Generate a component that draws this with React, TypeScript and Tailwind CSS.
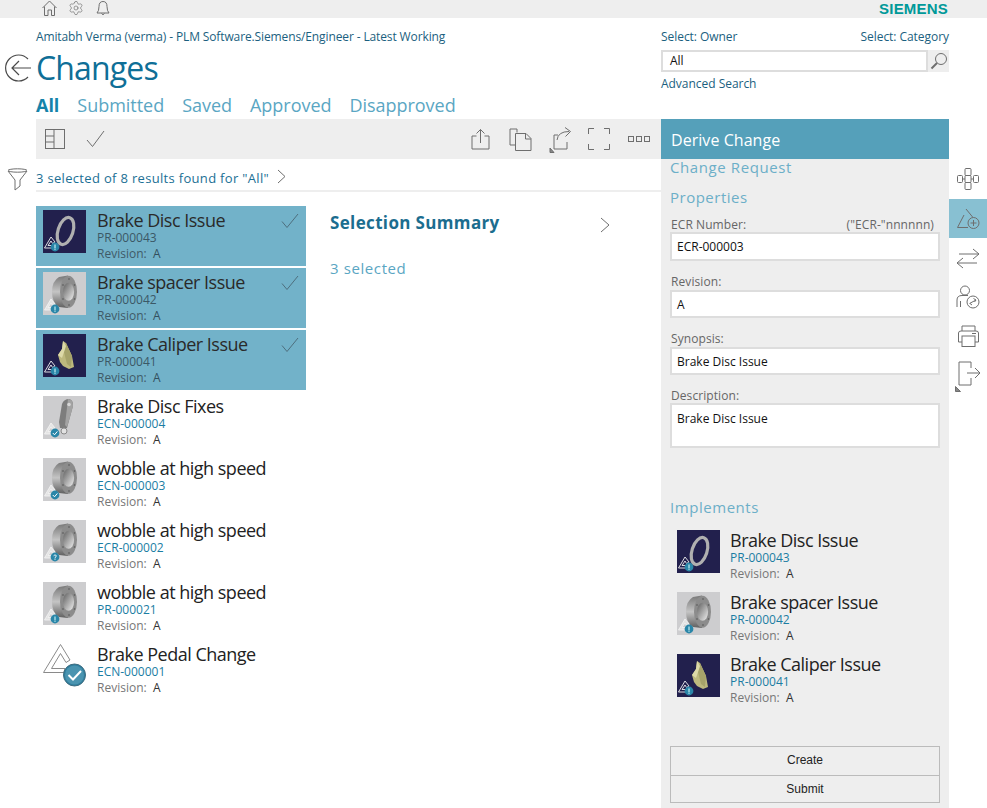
import React from "react";
import { Settings } from "lucide-react";

type ThumbKind = "disc" | "spacer" | "caliper" | "lever" | "pedal";
type Badge = "info" | "ok" | "q";

const Ico = ({ w, h, children, className = "" }: { w: number; h: number; children: React.ReactNode; className?: string }) => (
  <svg width={w} height={h} viewBox={`0 0 ${w} ${h}`} fill="none" stroke="#6e6e6e" strokeWidth={1} className={"block shrink-0 " + className}>
    {children}
  </svg>
);

function Delta({ large, light }: { large?: boolean; light?: boolean }) {
  return large ? (
    <path d="M0.5 28.5 L17.5 0.5 L27 16 L23 18.5 L17.5 9.5 L8.5 24.5 L22 24.5 L21 28.5 Z" fill="#fff" stroke="#8a8a8a" strokeWidth="1" />
  ) : (
    <path d="M1.5 38 L8 27 L12 32 L9.5 33.5 L8 31 L5 35.5 L11 35.5 L10.5 38 Z" fill={light ? "#e4e4e4" : "#22204d"} stroke="#f2f2f2" strokeWidth="0.9" />
  );
}

function BadgeMark({ kind, large }: { kind: Badge; large?: boolean }) {
  if (large) {
    return (
      <g>
        <circle cx="31.5" cy="31" r="11" fill="#2f7f9e" stroke="#3f6c80" />
        <circle cx="31.5" cy="31" r="9.5" fill="#4a94b0" />
        <path d="M25.5 31 L30 35.5 L38 27" stroke="#fff" strokeWidth="2" fill="none" />
      </g>
    );
  }
  return (
    <g>
      <circle cx="12" cy="37" r="4.4" fill="#2a86a8" />
      {kind === "info" && <path d="M12 34.5 V38.5 M12 39.2 V40" stroke="#dff" strokeWidth="1" />}
      {kind === "ok" && <path d="M9.8 37 L11.5 38.8 L14.4 35.4" stroke="#fff" strokeWidth="1" fill="none" />}
      {kind === "q" && <path d="M10.6 35.8 Q12 34 13.3 35.6 Q13.5 36.8 12 37.6 V38.5 M12 39.2 V40" stroke="#fff" strokeWidth="0.9" fill="none" />}
    </g>
  );
}

function Thumb({ kind, badge, id }: { kind: ThumbKind; badge: Badge; id: string }) {
  const navy = kind === "disc" || kind === "caliper";
  return (
    <svg width="43" height="43" viewBox="0 0 43 43" className="block shrink-0">
      <defs>
        <linearGradient id={id + "b"} x1="0" y1="0" x2="0" y2="1">
          <stop offset="0" stopColor="#777777" />
          <stop offset="0.5" stopColor="#c4c4c4" />
          <stop offset="1" stopColor="#5f5f5f" />
        </linearGradient>
        <linearGradient id={id + "h"} x1="0" y1="0" x2="1" y2="1">
          <stop offset="0" stopColor="#5e5e5e" />
          <stop offset="1" stopColor="#f0f0f0" />
        </linearGradient>
      </defs>
      {kind !== "pedal" && <rect width="43" height="43" fill={navy ? "#22204d" : "#cdcdcf"} />}
      {kind === "disc" && (
        <ellipse cx="22.5" cy="21" rx="7.5" ry="14" transform="rotate(18 22.5 21)" fill="none" stroke="#b0b0b0" strokeWidth="3.2" />
      )}
      {kind === "spacer" && (
        <g>
          <path d="M25 3.5 L16 5 Q9 9 9 20 Q9 31 16 35 L25 36 Z" fill={`url(#${id}b)`} />
          <ellipse cx="25.5" cy="19.8" rx="8.5" ry="16" fill="#8c8c8c" />
          <ellipse cx="25.5" cy="19.8" rx="5.6" ry="9" fill={`url(#${id}h)`} />
          <g fill="#555">
            <circle cx="26" cy="7" r="0.8" /><circle cx="31.5" cy="13" r="0.8" /><circle cx="31.5" cy="27" r="0.8" /><circle cx="26" cy="33" r="0.8" /><circle cx="20" cy="27" r="0.8" /><circle cx="20" cy="13" r="0.8" />
          </g>
        </g>
      )}
      {kind === "lever" && (
        <g>
          <path d="M19 8 Q21 3 26 3 Q30.5 4 30 10 L27 21 L24 32 L17 32 L16 26 Z" fill="#7d7d7d" />
          <path d="M25 3 Q30.5 4 30 10 L27 21 L24 31 L22 29 Z" fill="#a3a3a3" />
          <circle cx="26" cy="8.5" r="1.8" fill="#d6d6d6" />
          <circle cx="21" cy="35" r="3" fill="#e2e2e2" stroke="#8a8a8a" />
        </g>
      )}
      {kind === "caliper" && (
        <g>
          <path d="M20 7 L23 9 L29 22 L31 33 L26 35 L20 32 L17 28 L15 21 L19 15 Z" fill="#bdb97e" />
          <path d="M23 9 L29 22 L28 33 L24 30 L21 18 Z" fill="#a6a36a" />
          <path d="M20 7 L19 15 L15 21 L19 24 L23 12 Z" fill="#dcd9a8" />
        </g>
      )}
      <Delta large={kind === "pedal"} light={!navy} />
      <BadgeMark kind={badge} large={kind === "pedal"} />
    </svg>
  );
}

function Card({
  title, code, kind, badge, id, selected, tight,
}: { title: string; code: string; kind: ThumbKind; badge: Badge; id: string; selected?: boolean; tight?: boolean }) {
  return (
    <div className={"relative flex h-[60px] w-[270px] pl-[7px] pt-[4px] " + (selected ? "bg-[#72b2c9]" : "")}>
      <Thumb kind={kind} badge={badge} id={id} />
      <div className={"flex flex-col " + (tight ? "ml-[10px]" : "ml-[11px]")}>
        <div className={"h-[20px] text-[18px] leading-[20px] tracking-[-0.5px] whitespace-nowrap " + (selected ? "text-[#2a2a2a]" : "text-[#222222]")}>{title}</div>
        <div className={"h-[15px] text-[12px] leading-[15px] " + (selected ? "text-[#3b5866]" : "text-[#1b7da3]")}>{code}</div>
        <div className={"mt-[1px] text-[12px] leading-[15px] " + (selected ? "text-[#3f5a68]" : "text-[#777777]")}>
          Revision:&nbsp; <span className={selected ? "text-[#33505e]" : "text-[#333333]"}>A</span>
        </div>
      </div>
      {selected && (
        <Ico w={18} h={16} className="absolute right-[7px] top-[7px]">
          <path d="M1 8.5 L6 14.5 L17 1" stroke="#4e6f7e" />
        </Ico>
      )}
    </div>
  );
}

function Field({ label, value, h, mt, hint, labelH }: { label: string; value: string; h: string; mt: string; hint?: string; labelH: string }) {
  return (
    <div className={mt}>
      <div className={"flex justify-between pl-[1px] pr-[6px] text-[12px] leading-[15px] tracking-[0.08px] text-[#666666] " + labelH}>
        <span>{label}</span>
        {hint && <span>{hint}</span>}
      </div>
      <div className={"box-border border-2 border-[#dddddd] bg-white pl-[5px] text-[12px] text-[#111111] " + h}>{value}</div>
    </div>
  );
}

export default function App() {
  const items: { title: string; code: string; kind: ThumbKind; badge: Badge; selected?: boolean }[] = [
    { title: "Brake Disc Issue", code: "PR-000043", kind: "disc", badge: "info", selected: true },
    { title: "Brake spacer Issue", code: "PR-000042", kind: "spacer", badge: "info", selected: true },
    { title: "Brake Caliper Issue", code: "PR-000041", kind: "caliper", badge: "info", selected: true },
    { title: "Brake Disc Fixes", code: "ECN-000004", kind: "lever", badge: "ok" },
    { title: "wobble at high speed", code: "ECN-000003", kind: "spacer", badge: "ok" },
    { title: "wobble at high speed", code: "ECR-000002", kind: "spacer", badge: "q" },
    { title: "wobble at high speed", code: "PR-000021", kind: "spacer", badge: "info" },
    { title: "Brake Pedal Change", code: "ECN-000001", kind: "pedal", badge: "ok" },
  ];

  return (
    <div className="h-[808px] w-[987px] overflow-hidden bg-white font-['Open_Sans',sans-serif]">
      {/* top bar */}
      <div className="flex h-[18px] items-start bg-[#eeeeee] pl-[42px] pr-[39px]">
        <Ico w={15} h={16}>
          <path d="M0.5 8 L7.5 1 L14.5 8 M2.5 6.5 V15.5 H6 V10 H9.5 V15.5 H12.5 V6.5" />
        </Ico>
        <Settings size={16} strokeWidth={1} color="#6e6e6e" className="ml-[11px] shrink-0" />
        <Ico w={14} h={16} className="ml-[12px]">
          <path d="M1 13 Q3 11 3 6.5 Q3 1.5 7 1.5 Q11 1.5 11 6.5 Q11 11 13 13 Z M5.5 13.5 Q7 16 8.5 13.5" />
        </Ico>
        <div className="ml-auto h-[18px] font-['Liberation_Sans',sans-serif] text-[15px] font-bold leading-[17px] tracking-[0.2px] text-[#009999]">SIEMENS</div>
      </div>

      <div className="flex">
        {/* left column */}
        <div className="w-[661px]">
          <div className="ml-[36px] mt-[10px] h-[18px] text-[12px] leading-[18px] tracking-[-0.12px] text-[#1b5f80] whitespace-nowrap">
            Amitabh Verma (verma) - PLM Software.Siemens/Engineer - Latest Working
          </div>
          <div className="flex h-[44px] items-center">
            <div className="flex w-[36px] justify-start pl-[4px]">
              <Ico w={28} h={28}>
                <path d="M24 5 A13 13 0 1 0 24 23" stroke="#4a4a4a" strokeWidth="1.2" />
                <path d="M27 14 H8 M15 7 L8 14 L15 21" stroke="#4a4a4a" strokeWidth="1.2" />
              </Ico>
            </div>
            <div className="text-[32px] leading-[44px] tracking-[-0.85px] text-[#0f6f97]">Changes</div>
          </div>
          <div className="ml-[36px] mt-[2px] flex h-[27px] items-center gap-[18px] text-[18px] leading-[27px] tracking-[-0.03px] text-[#5aa6c3]">
            <span className="font-bold text-[#1583aa]">All</span>
            <span>Submitted</span>
            <span>Saved</span>
            <span>Approved</span>
            <span>Disapproved</span>
          </div>

          {/* toolbar */}
          <div className="ml-[36px] flex h-[40px] items-center bg-[#eeeeee] pl-[9px] pr-[11px]">
            <Ico w={20} h={20}>
              <rect x="0.5" y="0.5" width="19" height="19" strokeWidth="1" />
              <path d="M9 0.5 V19.5 M0.5 7 H9 M0.5 13 H9" />
            </Ico>
            <Ico w={19} h={18} className="ml-[21px]">
              <path d="M1 10 L6.5 16.5 L18 1" />
            </Ico>
            <div className="ml-auto flex items-center">
              <Ico w={19} h={22}>
                <path d="M5.5 8 H1 V21 H18 V8 H13.5 M9.5 15 V1.5 M5.5 5.5 L9.5 1.5 L13.5 5.5" />
              </Ico>
              <Ico w={23} h={23} className="ml-[19px]">
                <path d="M8 4.5 V1 H1 V17 H6 M6.5 5.5 H17 L22 10.5 V22.5 H6.5 Z M16.5 5.5 V11 H22" />
              </Ico>
              <Ico w={26} h={27} className="ml-[17px]">
                <path d="M9 9 H5 V23 H18 V16 M8 14 Q9 5.5 20 5.5 M16 1.5 L21.5 5.5 L16.5 10.5" />
                <path d="M1 22 L5 26.5 H1 Z" fill="#888" />
              </Ico>
              <Ico w={22} h={22} className="ml-[13px]">
                <path d="M0.5 6 V0.5 H6 M16 0.5 H21.5 V6 M21.5 16 V21.5 H16 M6 21.5 H0.5 V16" />
              </Ico>
              <Ico w={22} h={6} className="ml-[18px]">
                <rect x="0.5" y="0.5" width="5" height="5" />
                <rect x="8.5" y="0.5" width="5" height="5" />
                <rect x="16.5" y="0.5" width="5" height="5" />
              </Ico>
            </div>
          </div>

          {/* results line */}
          <div className="flex h-[33px]">
            <div className="flex w-[36px] justify-center pt-[9px] pr-[2px]">
              <Ico w={21} h={23}>
                <ellipse cx="10.5" cy="2.5" rx="9.5" ry="1.7" />
                <path d="M1 3 L8 12 V22 L13 18 V12 L20 3" />
              </Ico>
            </div>
            <div className="flex flex-1 items-center border-b-2 border-[#eeeeee] pt-[7px] text-[13px] leading-[18px] tracking-[0.32px] text-[#1b7095]">
              <span>3 selected of 8 results found for "All"</span>
              <Ico w={10} h={15} className="mb-[3px] ml-[8px]">
                <path d="M1 1 L8 7.5 L1 14" />
              </Ico>
            </div>
          </div>

          <div className="ml-[36px] mt-[14px] flex">
            <div className="flex w-[270px] flex-col gap-[2px]">
              {items.map((it, i) => (
                <Card key={i} id={"l" + i} {...it} />
              ))}
            </div>
            <div className="ml-[24px] w-[280px]">
              <div className="flex h-[34px] items-center justify-between">
                <span className="text-[17px] font-bold leading-[34px] tracking-[0.35px] text-[#1b6d8f]">Selection Summary</span>
                <Ico w={10} h={16} className="mt-[3px]">
                  <path d="M1 1 L9 8 L1 15" />
                </Ico>
              </div>
              <div className="mt-[10px] text-[15px] leading-[36px] tracking-[0.6px] text-[#5aa6c3]">3 selected</div>
            </div>
          </div>
        </div>

        {/* right column */}
        <div className="w-[288px]">
          <div className="mt-[10px] flex h-[18px] justify-between text-[12px] leading-[18px] tracking-[-0.05px] text-[#1b5f80]">
            <span>Select: Owner</span>
            <span>Select: Category</span>
          </div>
          <div className="mt-[4px] flex h-[22px]">
            <div className="box-border w-[267px] border-2 border-[#dddddd] bg-white pl-[7px] text-[12px] leading-[18px] text-[#111111]">All</div>
            <div className="flex w-[21px] items-center justify-center bg-[#eeeeee]">
              <Ico w={18} h={18}>
                <circle cx="11" cy="7" r="5.5" />
                <path d="M7 11 L1.5 16.5" strokeWidth="2" />
              </Ico>
            </div>
          </div>
          <div className="mt-[3px] h-[18px] text-[12px] leading-[18px] tracking-[-0.03px] text-[#1b5f80]">Advanced Search</div>
          <div className="mt-[26px] flex h-[689px] flex-col bg-[#eeeeee]">
            <div className="flex h-[40px] shrink-0 items-center bg-[#55a0ba] pl-[10px] pt-[2px] text-[16px] tracking-[0.05px] text-white">Derive Change</div>
            <div className="px-[9px]">
              <div className="h-[18px] text-[15px] leading-[17px] tracking-[0.6px] text-[#6cafc8]">Change Request</div>
              <div className="mt-[12px] h-[18px] text-[15px] leading-[17px] tracking-[0.5px] text-[#6cafc8]">Properties</div>
              <Field mt="mt-[10px]" labelH="h-[15px]" label="ECR Number:" hint={'("ECR-"nnnnnn)'} value="ECR-000003" h="h-[29px] leading-[25px]" />
              <Field mt="mt-[13px]" labelH="h-[16px]" label="Revision:" value="A" h="h-[28px] leading-[26px]" />
              <Field mt="mt-[13px]" labelH="h-[16px]" label="Synopsis:" value="Brake Disc Issue" h="h-[28px] leading-[26px]" />
              <Field mt="mt-[13px]" labelH="h-[15px]" label="Description:" value="Brake Disc Issue" h="h-[45px] leading-[27px]" />
              <div className="mt-[50px] h-[18px] text-[15px] leading-[18px] tracking-[0.55px] text-[#6cafc8]">Implements</div>
              <div className="mt-[10px] flex flex-col gap-[2px]">
                {items.slice(0, 3).map((it, i) => (
                  <Card key={i} id={"r" + i} tight title={it.title} code={it.code} kind={it.kind} badge={it.badge} />
                ))}
              </div>
            </div>
            <div className="mt-auto mb-[5px] px-[9px] font-['Liberation_Sans',sans-serif] text-[12px] text-[#222222]">
              <div className="box-border flex h-[29px] items-center justify-center border border-b-0 border-[#bbbbbb] pb-[2px]">Create</div>
              <div className="box-border flex h-[28px] items-center justify-center border border-[#bbbbbb]">Submit</div>
            </div>
          </div>
        </div>

        {/* rail */}
        <div className="mt-[141px] flex w-[38px] flex-col items-center">
          <div className="flex h-[40px] w-full items-center justify-center">
            <Ico w={22} h={22}>
              <rect x="8" y="0.5" width="6" height="7" rx="1" />
              <rect x="8" y="7.5" width="6" height="7" rx="1" />
              <rect x="8" y="14.5" width="6" height="7" rx="1" />
              <rect x="0.5" y="7.5" width="5" height="7" rx="1" />
              <rect x="16.5" y="7.5" width="5" height="7" rx="1" />
              <path d="M5.5 11 H8 M14 11 H16.5" />
            </Ico>
          </div>
          <div className="flex h-[39px] w-full items-center justify-center bg-[#88c0d2]">
            <Ico w={24} h={22}>
              <path d="M10 1 L17 9.5 M8 7 L1.5 19.5 H12" />
              <circle cx="17.5" cy="15" r="5.5" />
              <path d="M14.5 15 H20.5 M17.5 12 V18" />
            </Ico>
          </div>
          <div className="flex h-[40px] w-full items-center justify-center">
            <Ico w={24} h={21}>
              <path d="M3 6 H23 M17 1 L23 6 L17 11 M21 15 H1 M7 10 L1 15 L7 20" />
            </Ico>
          </div>
          <div className="flex h-[38px] w-full items-center justify-center">
            <Ico w={24} h={24}>
              <circle cx="9" cy="5.5" r="4.5" />
              <path d="M1 22 V15 Q1 10.5 6 10.5 H12 M4.5 16 V22" />
              <circle cx="17" cy="17" r="6" />
              <path d="M13.5 18.5 L20 15 M17.5 13.5 L20 15 L18.5 17 M14 18.5 L16 20" />
            </Ico>
          </div>
          <div className="flex h-[40px] w-full items-center justify-center">
            <Ico w={23} h={22}>
              <path d="M5 6 V1 H18 V6 M5 17 H1.5 V8 Q1.5 6 4 6 H19 Q21.5 6 21.5 8 V17 H18" />
              <rect x="5" y="11" width="13" height="10.5" />
              <path d="M15 8.5 H19" />
            </Ico>
          </div>
          <div className="flex h-[40px] w-full items-center justify-center">
            <Ico w={26} h={34}>
              <path d="M16 9 V3 H4 V26 H16 V19 M12 14 H25 M20 9 L25 14 L20 19" />
              <path d="M0.5 27.5 L5.5 32.5 H0.5 Z" fill="#888" />
            </Ico>
          </div>
        </div>
      </div>
    </div>
  );
}
